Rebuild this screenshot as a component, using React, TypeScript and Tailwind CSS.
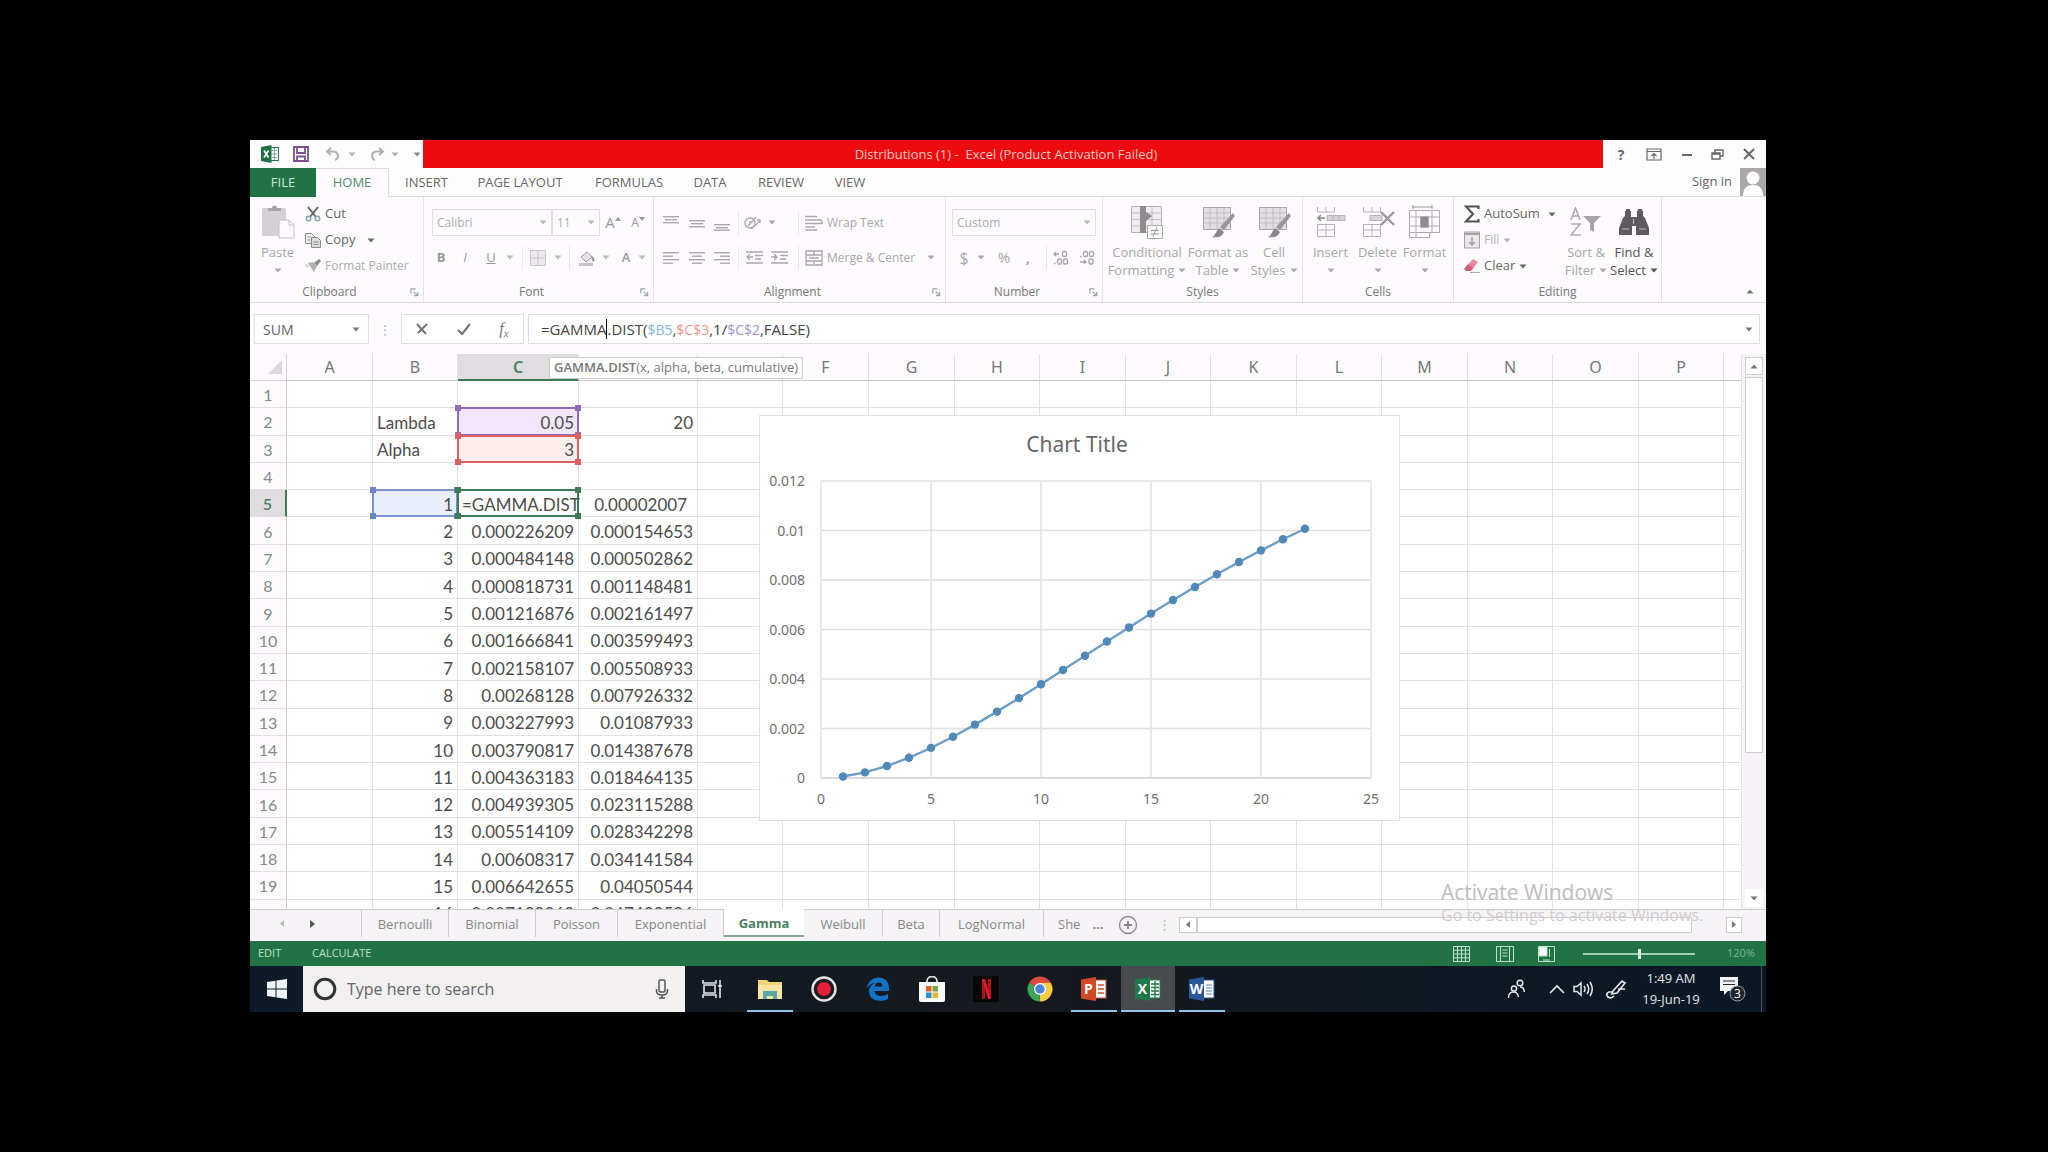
import React from "react";
import clsx from "clsx";

const GREEN = "#217346";

/* ---------- small shared pieces ---------- */

function Caret({ className }: { className?: string }) {
  return (
    <svg viewBox="0 0 8 5" aria-hidden="true" className={clsx("h-[5px] w-2 shrink-0", className)}>
      <path d="M0.5 0.5h7L4 4.500z" fill="currentColor" />
    </svg>
  );
}

function Launcher() {
  return (
    <svg viewBox="0 0 10 10" className="h-[9px] w-[9px] text-gray-400" aria-hidden="true">
      <path d="M1 6V1h5M4 4l4 4M8.5 4.5v4h-4" fill="none" stroke="currentColor" strokeWidth="1.3" />
    </svg>
  );
}

function Group({ label, width, launcher, children }: { label: string; width: string; launcher?: boolean; children: React.ReactNode }) {
  return (
    <section aria-label={label} className={clsx("flex shrink-0 flex-col border-r border-[#e6e2e6]", width)}>
      <div className="h-[86px]">{children}</div>
      <div className={clsx("grid h-5 grid-cols-[1fr_auto_1fr] items-center text-[12px] text-[#777]", launcher && "pr-1")}>
        <span />
        <span className={clsx(launcher && "pr-2.5")}>{label}</span>
        <span className="flex justify-end">{launcher && <Launcher />}</span>
      </div>
    </section>
  );
}

function Lines({ rows, className }: { rows: [number, number, number][]; className?: string }) {
  return (
    <svg viewBox="0 0 16 16" className={clsx("h-4 w-4 shrink-0", className)} aria-hidden="true">
      {rows.map(([x, y, w], i) => (
        <rect key={i} x={x} y={y} width={w} height="1.4" fill="currentColor" />
      ))}
    </svg>
  );
}

function IconButton({ label, width = "w-6", children }: { label: string; width?: string; children: React.ReactNode }) {
  return (
    <button type="button" aria-label={label} className={clsx("flex h-6 shrink-0 items-center justify-center", width)}>
      {children}
    </button>
  );
}

function BigButton({ icon, lines, caret, width, dark }: { icon: React.ReactNode; lines: string[]; caret?: boolean; width: string; dark?: boolean }) {
  return (
    <button type="button" className={clsx("flex shrink-0 flex-col items-center pt-[9px] text-[13px] leading-[18px]", width, dark ? "text-[#555]" : "text-[#aaa6aa]")}>
      <span className="mb-[5px] flex h-8 items-center">{icon}</span>
      <span className="whitespace-nowrap">{lines[0]}</span>
      <span className="flex h-[18px] items-center gap-1 whitespace-nowrap">
        {lines[1]}
        {caret && <Caret />}
      </span>
    </button>
  );
}

const Sep = ({ className }: { className?: string }) => <span className={clsx("h-6 w-px shrink-0 bg-[#ece8ec]", className)} />;

/* ---------- title bar and tabs ---------- */

function TitleBar() {
  return (
    <header className="flex h-7 shrink-0 bg-[#fefdfe] text-[#666]">
      <div className="flex w-[173px] shrink-0 items-center pl-[11px]">
        <svg viewBox="0 0 18 18" className="h-[18px] w-[18px]" aria-hidden="true">
          <rect x="9" y="2.5" width="8.4" height="13" fill="#fff" stroke={GREEN} />
          <path d="M11 5.5h5M11 9h5M11 12.500h5M13.500 3v12" stroke="#7fae94" />
          <path d="M0 2l10.500-2v18L0 16z" fill="#1e7145" />
          <path d="M3 5.500l4.500 7M7.500 5.500L3 12.500" stroke="#fff" strokeWidth="1.700" />
        </svg>
        <button type="button" aria-label="Save" className="ml-[14px]">
          <svg viewBox="0 0 16 16" className="h-4 w-4" fill="none" stroke="#7a4f96" strokeWidth="1.800">
            <path d="M1 1h14v14H1zM4 1v6h8V1M4 15v-4.500h8V15" />
          </svg>
        </button>
        <button type="button" aria-label="Undo" className="ml-4 flex items-center gap-1.5 text-[#b4b0b4]">
          <svg viewBox="0 0 17 14" className="h-[14px] w-[17px]" fill="none" stroke="currentColor" strokeWidth="2">
            <path d="M6 1L2 4.500 6 8M2 4.500h7a5 4.500 0 0 1 1 8.500" />
          </svg>
          <Caret />
        </button>
        <button type="button" aria-label="Redo" className="ml-3 flex items-center gap-1.5 text-[#b4b0b4]">
          <svg viewBox="0 0 17 14" className="h-[14px] w-[17px]" fill="none" stroke="currentColor" strokeWidth="2">
            <path d="M11 1l4 3.500L11 8M15 4.500H8A5 4.500 0 0 0 7 13" />
          </svg>
          <Caret />
        </button>
        <button type="button" aria-label="Customize Quick Access Toolbar" className="ml-3.5 text-[#888]">
          <Caret />
        </button>
      </div>
      <h1 className="flex min-w-0 flex-1 items-center justify-center bg-[#ee0b10] pt-0.5 pr-[14px] text-[13px] text-[#ffc9c0]">
        Distributions (1) -&nbsp; Excel (Product Activation Failed)
      </h1>
      <div className="flex w-[163px] shrink-0 items-center justify-between pl-3 pr-[11px]">
        <button type="button" aria-label="Help" className="w-3 text-[14px] font-bold">?</button>
        <button type="button" aria-label="Ribbon Display Options">
          <svg viewBox="0 0 16 13" className="h-[13px] w-4" fill="none" stroke="currentColor" strokeWidth="1.200">
            <path d="M1 1h14v11H1zM1 3.500h14M8 11V6M5.500 8L8 5.500 10.500 8" />
          </svg>
        </button>
        <button type="button" aria-label="Minimize">
          <svg viewBox="0 0 12 12" className="h-3 w-3"><path d="M1 7h10" stroke="currentColor" strokeWidth="2" /></svg>
        </button>
        <button type="button" aria-label="Restore">
          <svg viewBox="0 0 13 13" className="h-[13px] w-[13px]" fill="none" stroke="currentColor" strokeWidth="1.400">
            <path d="M1 5h8v6H1zM1 6h8M4 5V2h8v6H9" />
          </svg>
        </button>
        <button type="button" aria-label="Close">
          <svg viewBox="0 0 12 12" className="h-3 w-3"><path d="M1 1l10 10M11 1L1 11" stroke="currentColor" strokeWidth="2" /></svg>
        </button>
      </div>
    </header>
  );
}

const TABS: [string, string][] = [
  ["INSERT", "w-[75px]"],
  ["PAGE LAYOUT", "w-[112px]"],
  ["FORMULAS", "w-[106px]"],
  ["DATA", "w-14"],
  ["REVIEW", "w-[86px]"],
  ["VIEW", "w-[52px]"],
];

function RibbonTabs() {
  return (
    <nav className="flex h-[29px] shrink-0 bg-[#fefdfe] text-[13px] text-[#666]">
      <button type="button" className="w-[66px] bg-[#217346] text-[#c9e6d4]">FILE</button>
      <button type="button" className="w-[73px] border-t border-r border-[#e0dce0] bg-[#fdfbfd] text-[#4f8a69]">HOME</button>
      {TABS.map(([t, w]) => (
        <button type="button" key={t} className={clsx("border-b border-[#e0dce0] pt-0.5 whitespace-nowrap", w)}>{t}</button>
      ))}
      <div className="flex flex-1 items-center justify-end gap-2 border-b border-[#e0dce0]">
        <a href="#signin" className="text-[13px]">Sign in</a>
        <svg viewBox="0 0 26 28" className="h-7 w-[26px]" aria-hidden="true">
          <rect width="26" height="28" fill="#aaa6aa" />
          <circle cx="13" cy="10" r="6.500" fill="#fff" />
          <path d="M3 28c0-8 4-11 10-11s10 3 10 11z" fill="#fff" />
        </svg>
      </div>
    </nav>
  );
}

/* ---------- ribbon ---------- */

function ClipboardGroup() {
  return (
    <Group label="Clipboard" width="w-[174px]" launcher>
      <div className="flex">
        <BigButton
          width="w-[55px]"
          lines={["Paste", ""]}
          caret
          icon={
            <svg viewBox="0 0 36 36" className="h-9 w-9" aria-hidden="true">
              <rect x="2" y="4" width="24" height="28" rx="1.500" fill="#d6d0d4" />
              <path d="M8 7V4h4a2.500 2.500 0 0 1 5 0h4v3z" fill="#a9a3a7" />
              <path d="M19 16h10l5 5v13H19z" fill="#fbf9fb" stroke="#c6c1c5" />
              <path d="M29 16v5h5" fill="none" stroke="#c6c1c5" />
            </svg>
          }
        />
        <div className="flex flex-col pt-1 text-[13px]">
          <button type="button" className="flex h-[26px] items-center gap-1 text-[#666]">
            <svg viewBox="0 0 16 16" className="h-4 w-4" fill="none" stroke="currentColor" aria-hidden="true">
              <path d="M3 1l8 10M13 1L5 11" strokeWidth="2" />
              <circle cx="3.500" cy="12.500" r="2.300" stroke="#8a9fb0" strokeWidth="1.400" />
              <circle cx="12.500" cy="12.500" r="2.300" stroke="#8a9fb0" strokeWidth="1.400" />
            </svg>
            Cut
          </button>
          <button type="button" className="flex h-[26px] items-center gap-1 text-[#666]">
            <svg viewBox="0 0 16 16" className="h-4 w-4" stroke="#888" aria-hidden="true">
              <path d="M.5 1.500h6l3 3v7h-9z" fill="#eee" />
              <path d="M6.500 5.500h6l3 3v7h-9z" fill="#ddd" />
              <path d="M8.500 10h5M8.500 12.500h5M2.500 5h3M2.500 8h3" />
            </svg>
            Copy
            <Caret className="ml-2" />
          </button>
          <button type="button" className="flex h-[26px] items-center gap-1 whitespace-nowrap text-[12px] text-[#b0acb0]">
            <svg viewBox="0 0 16 16" className="h-4 w-4" aria-hidden="true">
              <path d="M9 5l5-4 2 2-4 5z" fill="#888" />
              <path d="M3 5l5-1 4 4-3 6z" fill="#b5b0b4" />
              <path d="M0 6l4 1-2 3z" fill="#ccc" />
            </svg>
            Format Painter
          </button>
        </div>
      </div>
    </Group>
  );
}

function RibbonSelect({ label, value, width }: { label: string; value: string; width: string }) {
  return (
    <div className={clsx("relative flex h-[27px] items-center border border-[#e2dee2]", width)}>
      <select aria-label={label} defaultValue={value} className="w-full appearance-none bg-transparent pl-1 text-[12px] text-[#b0acb0]">
        <option>{value}</option>
      </select>
      <Caret className="pointer-events-none absolute right-1 text-[#bbb]" />
    </div>
  );
}

function FontGroup() {
  return (
    <Group label="Font" width="w-[230px]" launcher>
      <div className="flex flex-col gap-2 pt-3 pl-2 text-[#9a969a]">
        <div className="flex h-[27px] items-center">
          <RibbonSelect label="Font name" value="Calibri" width="w-[120px]" />
          <RibbonSelect label="Font size" value="11" width="w-12" />
          <IconButton label="Increase font size" width="w-[26px]">
            <span className="text-[15px]">A</span>
            <svg viewBox="0 0 6 12" className="h-3 w-1.5" aria-hidden="true"><path d="M0 4h6L3 0z" fill="currentColor" /></svg>
          </IconButton>
          <IconButton label="Decrease font size">
            <span className="text-[12px]">A</span>
            <svg viewBox="0 0 6 12" className="h-3 w-1.5" aria-hidden="true"><path d="M0 0h6L3 4z" fill="currentColor" /></svg>
          </IconButton>
        </div>
        <div className="flex h-[27px] items-center text-[13px]">
          <IconButton label="Bold" width="w-[18px]"><b>B</b></IconButton>
          <IconButton label="Italic" width="w-[30px]"><i>I</i></IconButton>
          <IconButton label="Underline" width="w-10"><span className="flex items-center gap-2.5"><u>U</u><Caret className="text-[#bbb]" /></span></IconButton>
          <Sep className="ml-0.5" />
          <IconButton label="Borders" width="w-[46px]">
            <span className="flex items-center gap-2">
              <svg viewBox="0 0 16 16" className="h-4 w-4" fill="#eee9ed" stroke="#c8c3c7" aria-hidden="true">
                <path d="M.5.5h15v15H.5zM8 0v16M0 8h16" />
              </svg>
              <Caret className="text-[#bbb]" />
            </span>
          </IconButton>
          <Sep />
          <IconButton label="Fill color" width="w-12">
            <span className="flex items-center gap-1.5">
              <svg viewBox="0 0 18 16" className="h-4 w-[18px]" aria-hidden="true">
                <path d="M3 7l6-5 5 5-6 5z" fill="#e6e2e5" stroke="#a09ba0" />
                <path d="M14 6c3 2 3 5 1 6-1-2-2-4-1-6z" fill="#999" />
                <rect x="1" y="13" width="14" height="3" fill="#c8c3c7" />
              </svg>
              <Caret className="text-[#bbb]" />
            </span>
          </IconButton>
          <IconButton label="Font color" width="w-8"><span className="flex items-center gap-2 font-semibold">A<Caret className="text-[#bbb]" /></span></IconButton>
        </div>
      </div>
    </Group>
  );
}

function AlignmentGroup() {
  return (
    <Group label="Alignment" width="w-[292px]" launcher>
      <div className="flex flex-col gap-2 pt-3 pl-1 text-[12px] text-[#aaa6aa]">
        <div className="flex h-[27px] items-center">
          <IconButton label="Top align" width="w-[26px]"><Lines rows={[[0, 1, 16], [2, 4, 12], [0, 7, 16]]} /></IconButton>
          <IconButton label="Middle align" width="w-[25px]"><Lines rows={[[0, 5, 16], [2, 8, 12], [0, 11, 16]]} /></IconButton>
          <IconButton label="Bottom align" width="w-[25px]"><Lines rows={[[0, 9, 16], [2, 12, 12], [0, 14.5, 16]]} /></IconButton>
          <Sep className="ml-1" />
          <IconButton label="Orientation" width="w-[42px]">
            <span className="flex items-center gap-1.5">
              <svg viewBox="0 0 18 16" className="h-4 w-[18px]" fill="none" stroke="currentColor" strokeWidth="1.300" aria-hidden="true">
                <circle cx="6" cy="8" r="5" /><path d="M4 11L12 2M7 14L16 6M13 5h3v3M6 6v4" />
              </svg>
              <Caret />
            </span>
          </IconButton>
          <Sep className="ml-[17px]" />
          <button type="button" className="flex items-center gap-1 pl-1.5 whitespace-nowrap">
            <svg viewBox="0 0 18 16" className="h-4 w-[18px]" fill="none" stroke="currentColor" strokeWidth="1.400" aria-hidden="true"><path d="M0 1.500h12M0 5h17M0 8.500h17V6M0 12h10M0 15h12" /></svg>
            Wrap Text
          </button>
        </div>
        <div className="flex h-[27px] items-center">
          <IconButton label="Align left" width="w-[26px]"><Lines rows={[[0, 2, 16], [0, 5.5, 10], [0, 9, 16], [0, 12.500, 10]]} /></IconButton>
          <IconButton label="Center" width="w-[25px]"><Lines rows={[[0, 2, 16], [3, 5.5, 10], [0, 9, 16], [3, 12.500, 10]]} /></IconButton>
          <IconButton label="Align right" width="w-[25px]"><Lines rows={[[0, 2, 16], [6, 5.5, 10], [0, 9, 16], [6, 12.500, 10]]} /></IconButton>
          <Sep className="ml-1" />
          <IconButton label="Decrease indent" width="w-8">
            <svg viewBox="0 0 18 14" className="h-[14px] w-[18px]" fill="none" stroke="currentColor" strokeWidth="1.300"><path d="M0 1h17M9 4.500h8M9 8h6M0 12h17M7 6H1M4 3L1 6l3 3" /></svg>
          </IconButton>
          <IconButton label="Increase indent" width="w-[18px]">
            <svg viewBox="0 0 18 14" className="h-[14px] w-[18px]" fill="none" stroke="currentColor" strokeWidth="1.300"><path d="M0 1h17M9 4.500h8M9 8h6M0 12h17M0 6h6M3 3l3 3-3 3" /></svg>
          </IconButton>
          <Sep className="ml-[9px]" />
          <button type="button" className="flex items-center gap-1 pl-1.5 whitespace-nowrap">
            <svg viewBox="0 0 18 16" className="h-4 w-[18px]" fill="none" stroke="currentColor" strokeWidth="1.300" aria-hidden="true"><path d="M1 1h16v14H1zM1 5h16M1 11h16M9 1v4M9 11v4M4 8h10" /></svg>
            Merge &amp; Center
            <Caret className="ml-2" />
          </button>
        </div>
      </div>
    </Group>
  );
}

function NumberGroup() {
  return (
    <Group label="Number" width="w-[157px]" launcher>
      <div className="flex flex-col gap-2 pt-3 pl-1.5 text-[#aaa6aa]">
        <RibbonSelect label="Number format" value="Custom" width="w-[144px]" />
        <div className="flex h-[27px] items-center text-[15px]">
          <IconButton label="Accounting format" width="w-10"><span className="flex items-center gap-2 text-[16px]">$<Caret /></span></IconButton>
          <IconButton label="Percent style" width="w-6">%</IconButton>
          <IconButton label="Comma style" width="w-6"><b>,</b></IconButton>
          <Sep className="ml-1.5" />
          <IconButton label="Increase decimal" width="w-7">
            <svg viewBox="0 0 16 16" className="h-4 w-4" fill="none" stroke="currentColor" strokeWidth="1.400" aria-hidden="true">
              <path d="M6 4H1M3 2L1 4l2 2M1 13.500h1.500" /><rect x="9.500" y="1.500" width="4" height="5" rx="1.500" /><rect x="4.500" y="9" width="4" height="5" rx="1.500" /><rect x="10.500" y="9" width="4" height="5" rx="1.500" />
            </svg>
          </IconButton>
          <IconButton label="Decrease decimal">
            <svg viewBox="0 0 16 16" className="h-4 w-4" fill="none" stroke="currentColor" strokeWidth="1.400" aria-hidden="true">
              <path d="M1 12h6M5 10l2 2-2 2M1 6.500h1.500" /><rect x="10" y="9" width="4" height="5" rx="1.500" /><rect x="4.500" y="1.500" width="4" height="5" rx="1.500" /><rect x="10.500" y="1.500" width="4" height="5" rx="1.500" />
            </svg>
          </IconButton>
        </div>
      </div>
    </Group>
  );
}

function TableBrush() {
  return (
    <svg viewBox="0 0 34 34" className="h-[34px] w-[34px]" aria-hidden="true">
      <path d="M2.500 2.500h27v22h-27z" fill="#e2dee1" stroke="#aaa5a9" />
      <path d="M3 8h26M3 13h26M3 18h26M9 3v21M16 3v21M23 3v21" stroke="#c2bdc1" />
      <path d="M32 8l2 3-11 14-4-3z" fill="#9a959a" />
      <path d="M18 23l5 4c-2 5-7 6-12 5 4-2 4-6 7-9z" fill="#8b868a" />
    </svg>
  );
}

function StylesGroup() {
  return (
    <Group label="Styles" width="w-[200px]">
      <div className="flex pl-1.5">
        <BigButton
          width="w-[76px]"
          lines={["Conditional", "Formatting"]}
          caret
          icon={
            <svg viewBox="0 0 34 34" className="h-[34px] w-[34px]" aria-hidden="true">
              <path d="M1.500 1.500h30v26h-30z" fill="#efecef" stroke="#b5b0b4" />
              <path d="M2 8h29M2 14.500h29M2 21h29M22 2v25" stroke="#c2bdc1" />
              <path d="M10 1h6v27h-6zM16 7l6 4-6 5z" fill="#8f8a8e" />
              <path d="M17.500 20.500h15v13h-15z" fill="#faf8fa" stroke="#aaa" />
              <path d="M21 29h8M21 25.500h8M27 22l-4 10" stroke="#999" />
            </svg>
          }
        />
        <BigButton width="w-[66px]" lines={["Format as", "Table"]} caret icon={<TableBrush />} />
        <BigButton width="w-[46px]" lines={["Cell", "Styles"]} caret icon={<TableBrush />} />
      </div>
    </Group>
  );
}

function CellsGroup() {
  return (
    <Group label="Cells" width="w-[151px]">
      <div className="flex pl-1">
        <BigButton
          width="w-[47px]"
          lines={["Insert", ""]}
          caret
          icon={
            <svg viewBox="0 0 32 32" className="h-8 w-8" fill="none" stroke="#b5b0b4" aria-hidden="true">
              <path d="M2.500 1v5h17V1M11 1v5M2.500 18.500h17v12h-17zM2.500 24h17M11 18v12" />
              <path d="M12 9.500h18v5H12zM18 9.500v5M24 9.500v5" fill="#d8d3d7" />
              <path d="M3 12h7M6 9l-3 3 3 3" stroke="#888" strokeWidth="1.500" />
            </svg>
          }
        />
        <BigButton
          width="w-[47px]"
          lines={["Delete", ""]}
          caret
          icon={
            <svg viewBox="0 0 34 32" className="h-8 w-[34px]" fill="none" stroke="#b5b0b4" aria-hidden="true">
              <path d="M2.500 1v5h17V1M11 1v5M2.500 18.500h17v12h-17zM2.500 24h17M11 18v12" />
              <path d="M9 9.500h12v5H9z" fill="#d8d3d7" />
              <path d="M20 6l13 13M33 6L20 19" stroke="#9a959a" strokeWidth="2.400" />
            </svg>
          }
        />
        <BigButton
          width="w-[47px]"
          lines={["Format", ""]}
          caret
          icon={
            <svg viewBox="0 0 34 34" className="h-[34px] w-[34px]" fill="none" stroke="#b0abaf" aria-hidden="true">
              <path d="M1.500 5.500h30v22h-30zM8 5v27M24 5v22M2 12h30M2 21h30M1.500 27v5.500h20V27" />
              <path d="M12.500 11.500h8v11h-8z" fill="#8f8a8e" />
              <path d="M4 2h20M5 0v4M24 0v4" stroke="#999" />
            </svg>
          }
        />
      </div>
    </Group>
  );
}

function EditingGroup() {
  return (
    <Group label="Editing" width="w-[208px]">
      <div className="flex pl-2.5">
        <div className="flex w-[98px] flex-col pt-1 text-[13px] text-[#666]">
          <button type="button" className="flex h-[26px] items-center gap-1">
            <svg viewBox="0 0 16 18" className="h-[18px] w-4" aria-hidden="true">
              <path d="M14.500 4V1.500H2L9 9l-7 7.500h12.500V14" fill="none" stroke="#555" strokeWidth="2.200" />
            </svg>
            AutoSum
            <Caret className="ml-1" />
          </button>
          <button type="button" className="flex h-[26px] items-center gap-1 text-[12px] text-[#b8b4b8]">
            <svg viewBox="0 0 16 18" className="h-[18px] w-4" fill="none" stroke="#a5a0a4" aria-hidden="true">
              <path d="M.5 1h15v16H.5z" fill="#eae6ea" /><path d="M1 3h14" strokeWidth="2" /><path d="M8 6v8M5 11l3 3 3-3" strokeWidth="1.500" />
            </svg>
            Fill
            <Caret />
          </button>
          <button type="button" className="flex h-[26px] items-center gap-1">
            <svg viewBox="0 0 16 16" className="h-4 w-4" aria-hidden="true">
              <path d="M9 1l5 3-6 8H2l-1-2z" fill="#e58ba0" /><path d="M4 6l5 4-2 3H2l-2-2z" fill="#c9627c" /><path d="M6 14.500h10" stroke="#aaa" />
            </svg>
            Clear
            <Caret />
          </button>
        </div>
        <BigButton
          width="w-12"
          lines={["Sort &", "Filter"]}
          caret
          icon={
            <svg viewBox="0 0 32 30" className="h-[30px] w-8" fill="none" stroke="#b0abaf" strokeWidth="1.600" aria-hidden="true">
              <path d="M1 13L5.500 1 10 13M2.500 9h6M1 17h9L1 28h10" />
              <path d="M13 9h18l-7 7v9l-4-2v-7z" fill="#a8a3a7" stroke="none" />
            </svg>
          }
        />
        <BigButton
          width="w-12"
          lines={["Find &", "Select"]}
          caret
          dark
          icon={
            <svg viewBox="0 0 30 26" className="h-[26px] w-[30px]" fill="#5e5a5e" aria-hidden="true">
              <path d="M6 2h6v6h6V2h6v5l2 2 4 10v7H17v-9h-4v9H0v-7L4 9l2-2z" />
              <path d="M7 0h4v2H7zM19 0h4v2h-4z" />
              <path d="M3 20h7M20 20h7M14.500 10v5" stroke="#b5b1b5" strokeWidth="1.200" />
            </svg>
          }
        />
      </div>
    </Group>
  );
}

function Ribbon() {
  return (
    <div className="flex h-[106px] shrink-0 border-b border-[#dcd8dc] bg-[#fdfbfd]">
      <ClipboardGroup />
      <FontGroup />
      <AlignmentGroup />
      <NumberGroup />
      <StylesGroup />
      <CellsGroup />
      <EditingGroup />
      <button type="button" aria-label="Collapse the Ribbon" className="ml-auto flex items-end pr-3 pb-2 text-[#777]">
        <Caret className="rotate-180" />
      </button>
    </div>
  );
}

/* ---------- formula bar ---------- */

function FormulaBar() {
  return (
    <div className="flex h-[51px] shrink-0 items-start bg-[#fdfbfd] pt-[11px] pr-1.5 pl-1">
      <div className="relative flex h-[30px] w-[115px] shrink-0 items-center border border-[#e0dce0] bg-white">
        <input aria-label="Name Box" defaultValue="SUM" className="w-full bg-transparent pl-2 text-[14px] text-[#666] outline-none" />
        <Caret className="absolute right-2 text-[#777]" />
      </div>
      <span className="flex h-[30px] w-8 shrink-0 items-center justify-center text-[14px] text-[#bbb]">⋮</span>
      <div className="flex h-[30px] w-[123px] shrink-0 items-center justify-around border border-[#e0dce0] bg-white text-[#777]">
        <button type="button" aria-label="Cancel">
          <svg viewBox="0 0 12 12" className="h-3 w-3"><path d="M1 1l9 10M11 1L2 10" stroke="currentColor" strokeWidth="2" /></svg>
        </button>
        <button type="button" aria-label="Enter">
          <svg viewBox="0 0 14 12" className="h-3 w-[14px]"><path d="M1 7l4 4 8-10" fill="none" stroke="currentColor" strokeWidth="2.200" /></svg>
        </button>
        <button type="button" aria-label="Insert Function" className="font-['Liberation_Serif',serif] text-[16px] leading-4 italic">
          f<sub className="text-[11px]">x</sub>
        </button>
      </div>
      <div className="ml-1 flex h-[30px] min-w-0 flex-1 items-center justify-between border border-[#e0dce0] bg-white pr-1.5 pl-3">
        <div role="textbox" aria-label="Formula Bar" className="flex items-center whitespace-nowrap text-[15px] text-[#444]">
          <span>=GAMMA</span>
          <span className="h-5 w-px bg-black" />
          <span>.DIST(</span>
          <span className="text-[14px] text-[#86b4e0]">$B5</span>,
          <span className="text-[14px] text-[#f0938c]">$C$3</span>,1/
          <span className="text-[14px] text-[#9d97cf]">$C$2</span>,FALSE)
        </div>
        <Caret className="text-[#777]" />
      </div>
    </div>
  );
}

/* ---------- worksheet ---------- */

const COLS: [string, string][] = [
  ["A", "w-[86px]"], ["B", "w-[85px]"], ["C", "w-[121px]"], ["D", "w-[119px]"], ["E", "w-[85px]"],
  ["F", "w-[86px]"], ["G", "w-[86px]"], ["H", "w-[85px]"], ["I", "w-[86px]"], ["J", "w-[85px]"],
  ["K", "w-[86px]"], ["L", "w-[85px]"], ["M", "w-[86px]"], ["N", "w-[85px]"], ["O", "w-[86px]"],
  ["P", "w-[85px]"], ["", "w-auto"],
];

const COVERED_BY_TOOLTIP = ["D", "E"];

const C_VALUES = [
  "=GAMMA.DIST", "0.000226209", "0.000484148", "0.000818731", "0.001216876", "0.001666841", "0.002158107", "0.00268128",
  "0.003227993", "0.003790817", "0.004363183", "0.004939305", "0.005514109", "0.00608317", "0.006642655", "0.007189263",
];
const D_VALUES = [
  "0.00002007", "0.000154653", "0.000502862", "0.001148481", "0.002161497", "0.003599493", "0.005508933", "0.007926332",
  "0.01087933", "0.014387678", "0.018464135", "0.023115288", "0.028342298", "0.034141584", "0.04050544", "0.047422596",
];

function cellText(col: string, row: number): string {
  if (row === 2) return col === "B" ? "Lambda" : col === "C" ? "0.05" : col === "D" ? "20" : "";
  if (row === 3) return col === "B" ? "Alpha" : col === "C" ? "3" : "";
  if (row >= 5) {
    if (col === "B") return String(row - 4);
    if (col === "C") return C_VALUES[row - 5];
    if (col === "D") return D_VALUES[row - 5];
  }
  return "";
}

const MARKS: Record<string, { box: string; dot: string }> = {
  C2: { box: "border-[#8f6bb8] bg-[#f1e6fb]", dot: "bg-[#8f6bb8]" },
  C3: { box: "border-[#dd5f62] bg-[#fdeeee]", dot: "bg-[#dd5f62]" },
  B5: { box: "border-[#7d93cf] bg-[#e8eefc]", dot: "bg-[#6c85c8]" },
  C5: { box: "border-[#3d7a55] bg-white", dot: "bg-[#3d7a55]" },
};

function Cell({ col, row }: { col: string; row: number }) {
  const text = cellText(col, row);
  const mark = MARKS[col + row];
  const left = row < 4 ? col === "B" : col === "C" && row === 5;
  return (
    <td className={clsx("relative border-r border-b border-[#e3dfe3] px-1 pt-[3px] pb-0 whitespace-nowrap", left ? "text-left" : "text-right", col === "D" && row === 5 && "pr-2.5", mark && "z-10")}>
      {mark && (
        <span className={clsx("absolute -inset-px border-2", mark.box)}>
          <span className={clsx("absolute -top-1 -left-1 h-1.5 w-1.5", mark.dot)} />
          <span className={clsx("absolute -top-1 -right-1 h-1.5 w-1.5", mark.dot)} />
          <span className={clsx("absolute -bottom-1 -left-1 h-1.5 w-1.5", mark.dot)} />
          <span className={clsx("absolute -right-1 -bottom-1 h-1.5 w-1.5", mark.dot)} />
        </span>
      )}
      <span className="relative block">{text}</span>
    </td>
  );
}

function Chart() {
  const px = (x: number) => 62 + (x / 25) * 550;
  const py = (y: number) => 363 - (y / 0.012) * 297;
  const points = Array.from({ length: 22 }, (_, i) => {
    const x = i + 1;
    return [px(x), py(0.0000625 * x * x * Math.exp(-0.05 * x))];
  });
  const yTicks = [0, 0.002, 0.004, 0.006, 0.008, 0.01, 0.012];
  const xTicks = [0, 5, 10, 15, 20, 25];
  return (
    <svg viewBox="0 0 641 406" role="img" aria-label="Chart Title" className="absolute top-[61px] left-[509px] h-[406px] w-[641px] font-['Noto_Sans',sans-serif]">
      <rect x="0.5" y="0.5" width="640" height="405" fill="#fff" stroke="#e3dfe3" />
      <text x="318" y="37" textAnchor="middle" fontSize="21" fill="#666">Chart Title</text>
      {yTicks.map((t) => (
        <g key={t}>
          <path d={`M62 ${py(t)}H612`} stroke={t === 0 ? "#cfcbcf" : "#e3dfe3"} strokeWidth="1.500" />
          <text x="46" y={py(t) + 5} textAnchor="end" fontSize="14" fill="#707070">{t}</text>
        </g>
      ))}
      {xTicks.map((t) => (
        <g key={t}>
          <path d={`M${px(t)} 66V363`} stroke="#e3dfe3" strokeWidth="1.500" />
          <text x={px(t)} y="389" textAnchor="middle" fontSize="14" fill="#707070">{t}</text>
        </g>
      ))}
      <polyline points={points.map((p) => p.join(",")).join(" ")} fill="none" stroke="#6d9dc9" strokeWidth="2.400" />
      {points.map(([x, y], i) => (
        <circle key={i} cx={x} cy={y} r="4.200" fill="#5088b8" />
      ))}
    </svg>
  );
}

function Sheet() {
  return (
    <main className="flex min-h-0 flex-1 bg-[#f6f3f6]">
      <div className="relative min-w-0 flex-1 overflow-hidden bg-white">
        <table className="h-[573px] w-full table-fixed border-separate border-spacing-0 font-[Lato,sans-serif] text-[17px] leading-[20px] text-[#4c4c4c]">
          <thead>
            <tr className="h-[27px] bg-[#fdfbfd] font-['Noto_Sans',sans-serif] text-[16px] text-[#777]">
              <th className="w-[37px] border-r border-b border-[#d6d2d6]">
                <svg viewBox="0 0 14 14" className="mr-1 ml-auto h-[14px] w-[14px]" aria-hidden="true"><path d="M14 0v14H0z" fill="#dcd8dc" /></svg>
              </th>
              {COLS.map(([c, w], i) => (
                <th key={i} scope="col" aria-label={c} className={clsx("border-r border-r-[#e3dfe3] p-0", w, c === "C" ? "border-b-2 border-b-[#3d7a55] bg-[#e0dde0] font-semibold text-[#4b7f63]" : "border-b border-b-[#cbc7cb] font-normal")}>
                  {COVERED_BY_TOOLTIP.includes(c) ? null : c}
                </th>
              ))}
            </tr>
          </thead>
          <tbody>
            {Array.from({ length: 20 }, (_, i) => i + 1).map((r) => (
              <tr key={r} className="h-[27px]">
                <th scope="row" className={clsx("border-b border-b-[#e3dfe3] p-0 pt-0.5 text-[16px]", r === 5 ? "border-r-2 border-r-[#3d7a55] bg-[#e0dde0] font-semibold text-[#4b7f63]" : "border-r border-r-[#cbc7cb] bg-[#fdfbfd] font-normal text-[#888]")}>{r}</th>
                {COLS.map(([c], i) => (
                  <Cell key={i} col={c} row={r} />
                ))}
              </tr>
            ))}
          </tbody>
        </table>
        <Chart />
        <div role="tooltip" className="absolute top-[3px] left-[299px] z-20 flex h-[22px] items-center border border-[#cfcbcf] bg-white px-1 text-[13px] whitespace-nowrap text-[#777]">
          <b className="font-semibold">GAMMA.DIST</b>(x, alpha, beta, cumulative)
        </div>
        <p className="pointer-events-none absolute top-[524px] left-[1191px] text-[21px] leading-7 text-[#bfbbbf]">Activate Windows</p>
      </div>
      <div className="flex w-6 shrink-0 flex-col items-center pt-[3px] pb-0.5 text-[#777]">
        <button type="button" aria-label="Scroll up" className="flex h-[18px] w-[18px] items-center justify-center border border-[#cfcbcf] bg-white"><Caret className="rotate-180" /></button>
        <div className="mt-0.5 h-[376px] w-[18px] border border-[#cfcbcf] bg-white" />
        <button type="button" aria-label="Scroll down" className="mt-auto flex h-[18px] w-[18px] items-center justify-center bg-white"><Caret /></button>
      </div>
    </main>
  );
}

/* ---------- sheet tabs and status bar ---------- */

const SHEETS: [string, string][] = [
  ["Bernoulli", "w-[87px]"], ["Binomial", "w-[87px]"], ["Poisson", "w-[82px]"], ["Exponential", "w-[106px]"],
  ["Gamma", "w-20"], ["Weibull", "w-[79px]"], ["Beta", "w-[57px]"], ["LogNormal", "w-[104px]"],
];

function SheetTabs() {
  return (
    <div className="relative flex h-8 shrink-0 bg-[#f6f3f6] pb-1 text-[13px] text-[#888]">
      <div className="flex w-28 shrink-0 items-center border-t border-r border-[#cfcbcf] pl-7">
        <button type="button" aria-label="Previous sheets" className="w-8 text-left text-[#bbb]"><Caret className="rotate-90" /></button>
        <button type="button" aria-label="Next sheets" className="text-[#555]">
          <svg viewBox="0 0 6 10" className="h-2.5 w-1.5" aria-hidden="true"><path d="M0 1v8l5-4z" fill="currentColor" /></svg>
        </button>
      </div>
      {SHEETS.map(([s, w]) => (
        <button type="button" key={s} className={clsx("shrink-0", w, s === "Gamma" ? "border-b-2 border-[#8aa596] bg-white pt-1 font-bold text-[#4b7f63]" : "border-t border-r border-[#cfcbcf] pt-0.5")}>{s}</button>
      ))}
      <div className="flex min-w-0 flex-1 items-center border-t border-[#cfcbcf] pt-0.5 pr-6">
        <button type="button" className="pl-[14px]">She</button>
        <span className="ml-3 font-bold">...</span>
        <button type="button" aria-label="New sheet" className="ml-3.5">
          <svg viewBox="0 0 20 20" className="h-5 w-5" fill="none" stroke="#8a868a" aria-hidden="true"><circle cx="10" cy="10" r="8.500" strokeWidth="1.300" /><path d="M10 6v8M6 10h8" strokeWidth="2" /></svg>
        </button>
        <span className="ml-5 text-[#bbb]">⋮</span>
        <div className="ml-2 flex h-4 flex-1 items-center text-[#777]">
          <button type="button" aria-label="Scroll left" className="flex h-4 w-[18px] items-center justify-center border border-[#cfcbcf] bg-white"><Caret className="rotate-90" /></button>
          <div className="h-4 flex-1 border border-[#cfcbcf] bg-white" />
          <div className="w-[34px]" />
          <button type="button" aria-label="Scroll right" className="flex h-4 w-4 items-center justify-center border border-[#cfcbcf] bg-white"><Caret className="-rotate-90" /></button>
        </div>
      </div>
      <p className="pointer-events-none absolute -top-1 left-[1191px] text-[16px] leading-5 whitespace-nowrap text-[#cfcbcf]">Go to Settings to activate Windows.</p>
    </div>
  );
}

function StatusBar() {
  return (
    <footer className="flex h-[25px] shrink-0 items-center bg-[#217346] pr-[11px] pl-2 text-[11px] text-[#bfe0cb]">
      <span className="w-[54px]">EDIT</span>
      <span>CALCULATE</span>
      <div className="ml-auto flex items-center">
        <button type="button" aria-label="Normal view" className="mr-[26px]">
          <svg viewBox="0 0 17 16" className="h-4 w-[17px]" fill="none" stroke="currentColor"><path d="M.5.500h16v15H.5zM.5 4.200h16M.5 8h16M.5 11.800h16M4.500 0v16M8.500 0v16M12.500 0v16" /></svg>
        </button>
        <button type="button" aria-label="Page layout view" className="mr-6">
          <svg viewBox="0 0 18 16" className="h-4 w-[18px]" fill="none" stroke="currentColor"><path d="M.5.500h17v15H.5zM4.500.500h9v15h-9zM6.500 4h5M6.500 7h5M6.500 10h5" /></svg>
        </button>
        <button type="button" aria-label="Page break preview" className="mr-7">
          <svg viewBox="0 0 17 16" className="h-4 w-[17px]" fill="none" stroke="currentColor"><path d="M.5.500h16v15H.5z" /><path d="M1 1h8v9H1z" fill="#fff" /><path d="M11.500 3v8M5 14h7" /></svg>
        </button>
        <input type="range" aria-label="Zoom" defaultValue={50} className="mr-8 h-4 w-28 appearance-none bg-transparent [&::-webkit-slider-runnable-track]:h-0.5 [&::-webkit-slider-runnable-track]:bg-[#9fd0b1] [&::-webkit-slider-thumb]:-mt-1 [&::-webkit-slider-thumb]:h-2.5 [&::-webkit-slider-thumb]:w-[3px] [&::-webkit-slider-thumb]:appearance-none [&::-webkit-slider-thumb]:bg-[#d6efde]" />
        <span className="text-[#7db894]">120%</span>
      </div>
    </footer>
  );
}

/* ---------- taskbar ---------- */

function OfficeIcon({ letter, color, page }: { letter: string; color: string; page: React.ReactNode }) {
  return (
    <svg viewBox="0 0 26 24" className="h-6 w-[26px]" aria-hidden="true">
      <rect x="12" y="3" width="13" height="18" fill="#fff" stroke={color} />
      {page}
      <path d="M0 2.500L15 0v24L0 21.500z" fill={color} />
      <text x="7.500" y="17" textAnchor="middle" fontSize="14" fontWeight="700" fill="#fff">{letter}</text>
    </svg>
  );
}

const APPS: { name: string; open?: boolean; active?: boolean; icon: React.ReactNode }[] = [
  {
    name: "File Explorer", open: true,
    icon: <svg viewBox="0 0 26 24" className="h-6 w-[26px]"><path d="M1 3h9l2 2h13v17H1z" fill="#f0d27a" /><path d="M1 8h24v14H1z" fill="#fae6a4" /><path d="M6 22v-8h14v8h-4v-3h-6v3z" fill="#5aa7a8" /></svg>,
  },
  {
    name: "Recorder",
    icon: <svg viewBox="0 0 26 26" className="h-[26px] w-[26px]"><circle cx="13" cy="13" r="11.500" fill="#1c1c20" stroke="#e4e4e4" strokeWidth="2.400" /><circle cx="13" cy="13" r="7" fill="#e5203c" /></svg>,
  },
  {
    name: "Edge",
    icon: <svg viewBox="0 0 24 24" className="h-6 w-6"><path d="M1 11C2 4 7 .5 12.500.5 19 .5 23 5 23 11v3H8.500c.3 3.500 3 5 6.500 5 2.800 0 5-.8 7-2v5c-2 1.200-4.800 1.800-8 1.800C7 23.800 3 20 3 14.500 3 10.500 5.500 7.500 9 6 5.500 6.300 2.500 8.500 1 11zm7.700-1.500H16.500C16.500 7 15 5.500 12.700 5.500c-2.300 0-3.700 1.700-4 4z" fill="#1272c4" /></svg>,
  },
  {
    name: "Store",
    icon: <svg viewBox="0 0 26 26" className="h-[26px] w-[26px]"><path d="M8 8V5a5 4.500 0 0 1 10 0v3" fill="none" stroke="#ddd" strokeWidth="1.800" /><path d="M0 6h26v18q0 2-2 2H2q-2 0-2-2z" fill="#fafafa" /><path d="M7 10h5.500v5.500H7z" fill="#d8632e" /><path d="M13.500 10H19v5.500h-5.500z" fill="#7ba53a" /><path d="M7 16.500h5.500V22H7z" fill="#2b8fd0" /><path d="M13.500 16.500H19V22h-5.500z" fill="#e8b52a" /></svg>,
  },
  {
    name: "Netflix",
    icon: <svg viewBox="0 0 26 26" className="h-[26px] w-[26px]"><rect width="26" height="26" fill="#060606" /><path d="M9 3h3v20H9zM15 3h3v20h-3z" fill="#b3101c" /><path d="M9 3h3l6 20h-3z" fill="#e5192a" /></svg>,
  },
  {
    name: "Chrome",
    icon: (
      <svg viewBox="0 0 26 26" className="h-[26px] w-[26px]">
        <path d="M13 13L2.200 6.700A12.500 12.500 0 0 1 23.800 6.700z" fill="#dd4b3e" />
        <path d="M13 13V7L23.800 6.700A12.500 12.500 0 0 1 12.500 25.500z" fill="#f5cb42" />
        <path d="M13 13l-.5 12.500A12.500 12.500 0 0 1 2.200 6.700z" fill="#3fa35a" />
        <circle cx="13" cy="13" r="6" fill="#fff" /><circle cx="13" cy="13" r="4.700" fill="#4a86e0" />
      </svg>
    ),
  },
  { name: "PowerPoint", open: true, icon: <OfficeIcon letter="P" color="#d04a28" page={<path d="M17 8h6M17 12h6M17 16h6" stroke="#d04a28" strokeWidth="1.500" />} /> },
  { name: "Excel", open: true, active: true, icon: <OfficeIcon letter="X" color="#1e7a47" page={<path d="M16 7h8M16 10.500h8M16 14h8M16 17.500h8M20 4v17" stroke="#1e7a47" strokeWidth="1.300" />} /> },
  { name: "Word", open: true, icon: <OfficeIcon letter="W" color="#2b579a" page={<path d="M17 8h6M17 11h6M17 14h6M17 17h6" stroke="#8ea9d4" strokeWidth="1.300" />} /> },
];

function Taskbar() {
  return (
    <div className="flex h-[46px] shrink-0 bg-linear-to-r from-[#0c1a29] via-[#16191e] to-[#0a1826] text-[#e2e5e8]">
      <button type="button" aria-label="Start" className="flex w-[53px] shrink-0 items-center justify-center">
        <svg viewBox="0 0 20 20" className="h-5 w-5" fill="#eef3f7"><path d="M0 3l8.500-1.200v7.700H0zM9.500 1.600L20 0v9.500H9.500zM0 10.500h8.500v7.700L0 17zM9.500 10.500H20V20L9.500 18.400z" /></svg>
      </button>
      <div className="flex w-[382px] shrink-0 items-center bg-[#f2f0f1] pl-2.5 text-[#555]">
        <svg viewBox="0 0 24 24" className="h-6 w-6 shrink-0" aria-hidden="true"><circle cx="12" cy="12" r="9.800" fill="none" stroke="#333" strokeWidth="3" /></svg>
        <input aria-label="Search" placeholder="Type here to search" className="ml-2.5 min-w-0 flex-1 bg-transparent text-[16px] outline-none placeholder:text-[#666]" />
        <svg viewBox="0 0 14 20" className="mr-4 h-5 w-[14px] shrink-0" fill="none" stroke="#555" strokeWidth="1.500" aria-hidden="true"><rect x="4" y="1" width="6" height="12" rx="1.500" /><path d="M1.500 10v2q0 4 5.500 4t5.500-4v-2M7 16v3M4 19h6" /></svg>
      </div>
      <button type="button" aria-label="Task View" className="flex w-[54px] shrink-0 items-center justify-center">
        <svg viewBox="0 0 22 20" className="h-5 w-[22px]" fill="none" stroke="currentColor" strokeWidth="1.600"><path d="M3 6h11v8H3zM2 1v3h13V1M2 19v-3h13v3M19 1v18M17 7h4" /></svg>
      </button>
      <div className="ml-1 flex">
        {APPS.map((a) => (
          <button type="button" key={a.name} aria-label={a.name} className={clsx("relative flex w-[54px] items-center justify-center", a.active && "bg-[#474b4e]")}>
            {a.icon}
            {a.open && <span className={clsx("absolute bottom-0 h-0.5 bg-[#8ec4ea]", a.active ? "inset-x-0" : "inset-x-1")} />}
          </button>
        ))}
      </div>
      <div className="ml-auto flex shrink-0 items-center">
        <button type="button" aria-label="People" className="mr-6">
          <svg viewBox="0 0 18 20" className="h-5 w-[18px]" fill="none" stroke="currentColor" strokeWidth="1.500"><circle cx="13" cy="4" r="2.800" /><circle cx="7" cy="9.500" r="2.600" /><path d="M1.500 19c0-4 2-6 5-6s4.500 2 5 5M13 8c3 0 4 1.500 4.500 5" /></svg>
        </button>
        <button type="button" aria-label="Show hidden icons" className="mr-2">
          <svg viewBox="0 0 16 10" className="h-2.5 w-4" fill="none" stroke="currentColor" strokeWidth="1.700"><path d="M1 9l7-7 7 7" /></svg>
        </button>
        <button type="button" aria-label="Volume" className="mr-3">
          <svg viewBox="0 0 20 16" className="h-4 w-5" fill="none" stroke="currentColor" strokeWidth="1.500"><path d="M1 5.500h3L8 2v12l-4-3.500H1zM11 5q2 3 0 6M14 3q3.500 5 0 10M17 1q4.500 7 0 14" /></svg>
        </button>
        <button type="button" aria-label="Ink workspace" className="mr-2.5">
          <svg viewBox="0 0 22 20" className="h-5 w-[22px]" fill="none" stroke="currentColor" strokeWidth="1.700"><path d="M8 12L17 2l3 2-8 10-5 1zM9 17q-3 3-6 1-3-3 1-5h4M13 10h7" /></svg>
        </button>
        <time className="w-[68px] text-center text-[13px] leading-[21px] whitespace-nowrap">1:49 AM<br />19-Jun-19</time>
        <button type="button" aria-label="Notifications" className="ml-3.5">
          <svg viewBox="0 0 28 28" className="h-7 w-7"><path d="M1 2h18v14H9l-4 4v-4H1z" fill="#f2f4f5" /><path d="M4 6h12M4 9.500h12" stroke="#1a2631" strokeWidth="1.200" /><circle cx="18.500" cy="18.500" r="7.500" fill="#1a2631" stroke="#9aa3ab" /><text x="18.500" y="23" textAnchor="middle" fontSize="12" fill="#fff">3</text></svg>
        </button>
        <span className="mr-1 ml-3.5 h-[46px] w-px bg-[#4a5763]" />
      </div>
    </div>
  );
}

export default function App() {
  return (
    <div className="flex min-h-screen bg-black pt-[140px] pr-[282px] pb-[140px] pl-[250px] font-['Open_Sans',sans-serif]">
      <div className="flex min-w-0 flex-1 flex-col overflow-hidden bg-[#fdfbfd]">
        <TitleBar />
        <RibbonTabs />
        <Ribbon />
        <FormulaBar />
        <div className="flex h-[555px] flex-col">
          <Sheet />
        </div>
        <SheetTabs />
        <StatusBar />
        <Taskbar />
      </div>
    </div>
  );
}
